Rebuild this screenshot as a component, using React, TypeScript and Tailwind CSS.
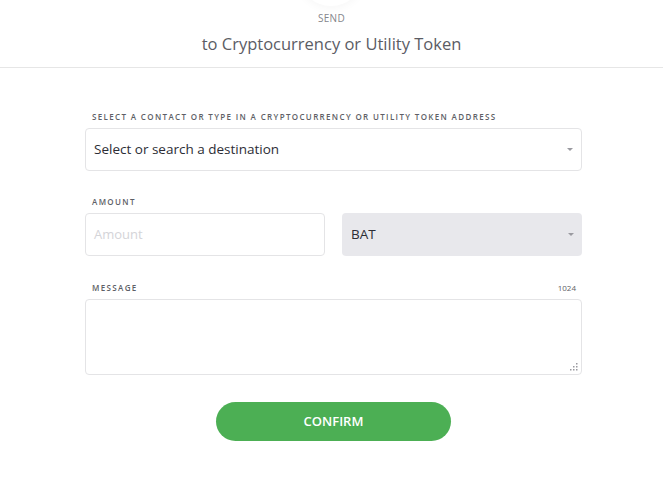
const Caret = () => (
  <svg width="6" height="3" viewBox="0 0 6 3" className="shrink-0">
    <path d="M0 0 L6 0 L3 3 Z" fill="#9a9aa0" />
  </svg>
)

const labelCls = 'text-[8px] leading-[10px] font-semibold tracking-[1.35px] text-[#5e5f66]'

export default function App() {
  return (
    <div className="relative w-[663px] h-[491px] bg-white overflow-hidden font-['Open_Sans',sans-serif]">
      {/* avatar shadow peeking from above */}
      <div className="absolute left-[298px] top-[-60px] w-[66px] h-[66px] rounded-full bg-white shadow-[0_2px_10px_rgba(0,0,0,0.04)]" />

      {/* Header */}
      <div className="flex flex-col items-center pt-[11px] h-[68px] border-b border-[#e6e6e6]">
        <div className="text-[10px] leading-[14px] text-[#85868c] tracking-[0.3px]">SEND</div>
        <div className="mt-[9px] text-[16.5px] leading-[20px] text-[#5b5c64]">to Cryptocurrency or Utility Token</div>
      </div>

      {/* Form */}
      <div className="w-[497px] ml-[85px] mt-[44px] flex flex-col">
        <label className={`pl-[7px] ${labelCls}`}>
          SELECT A CONTACT OR TYPE IN A CRYPTOCURRENCY OR UTILITY TOKEN ADDRESS
        </label>
        <div className="mt-[6px] h-[43px] flex items-center justify-between px-[8px] border border-[#e4e4e6] rounded-[4px]">
          <span className="text-[13.5px] text-[#2c2d35]">Select or search a destination</span>
          <Caret />
        </div>

        <label className={`mt-[26px] pl-[7px] ${labelCls}`}>AMOUNT</label>
        <div className="mt-[6px] flex gap-[17px]">
          <div className="w-[240px] h-[43px] flex items-center px-[8px] border border-[#e4e4e6] rounded-[4px]">
            <span className="text-[13px] text-[#d4d4d8]">Amount</span>
          </div>
          <div className="flex-1 h-[43px] flex items-center justify-between pl-[9px] pr-[8px] bg-[#e8e8ec] rounded-[4px]">
            <span className="text-[13.5px] text-[#2c2d35]">BAT</span>
            <Caret />
          </div>
        </div>

        <div className="mt-[27px] flex justify-between pl-[7px] pr-[6px]">
          <label className={labelCls}>MESSAGE</label>
          <span className="text-[8px] leading-[10px] text-[#5e5f66]">1024</span>
        </div>
        <div className="relative mt-[6px] h-[76px] border border-[#e4e4e6] rounded-[4px]">
          <svg width="8" height="8" viewBox="0 0 8 8" className="absolute right-[3px] bottom-[3px]">
            <rect x="6" y="0" width="1.5" height="1.5" fill="#9a9aa0" />
            <rect x="3" y="3" width="1.5" height="1.5" fill="#9a9aa0" />
            <rect x="6" y="3" width="1.5" height="1.5" fill="#9a9aa0" />
            <rect x="0" y="6" width="1.5" height="1.5" fill="#9a9aa0" />
            <rect x="3" y="6" width="1.5" height="1.5" fill="#9a9aa0" />
            <rect x="6" y="6" width="1.5" height="1.5" fill="#9a9aa0" />
          </svg>
        </div>

        <button className="mt-[27px] self-center w-[235px] h-[39px] rounded-full bg-[#4caf54] text-white text-[13px] font-semibold">
          CONFIRM
        </button>
      </div>
    </div>
  )
}
